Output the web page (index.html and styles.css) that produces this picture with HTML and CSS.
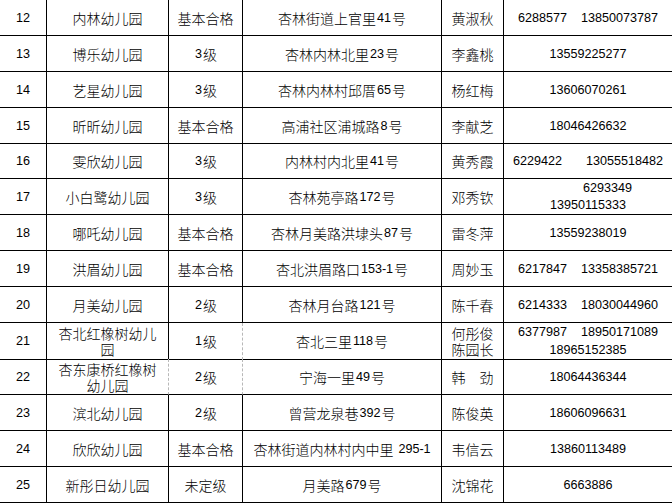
FILE: index.html
```html
<!DOCTYPE html>
<html lang="zh-CN">
<head>
<meta charset="utf-8">
<title>幼儿园名单</title>
<link rel="stylesheet" href="styles.css">
</head>
<body>
<div class="sheet">
  <div class="row">
    <div class="cell num">12</div>
    <div class="cell">内林幼儿园</div>
    <div class="cell">基本合格</div>
    <div class="cell">杏林街道上官里<span class="n">41</span>号</div>
    <div class="cell">黄淑秋</div>
    <div class="cell tel"><span class="pair"><span>6288577</span><span>13850073787</span></span></div>
  </div>
  <div class="row">
    <div class="cell num">13</div>
    <div class="cell">博乐幼儿园</div>
    <div class="cell"><span class="n">3</span>级</div>
    <div class="cell">杏林内林北里<span class="n">23</span>号</div>
    <div class="cell">李鑫桃</div>
    <div class="cell tel">13559225277</div>
  </div>
  <div class="row">
    <div class="cell num">14</div>
    <div class="cell">艺星幼儿园</div>
    <div class="cell"><span class="n">3</span>级</div>
    <div class="cell">杏林内林村邱厝<span class="n">65</span>号</div>
    <div class="cell">杨红梅</div>
    <div class="cell tel">13606070261</div>
  </div>
  <div class="row">
    <div class="cell num">15</div>
    <div class="cell">昕昕幼儿园</div>
    <div class="cell">基本合格</div>
    <div class="cell">高浦社区浦城路<span class="n">8</span>号</div>
    <div class="cell">李献芝</div>
    <div class="cell tel">18046426632</div>
  </div>
  <div class="row short">
    <div class="cell num">16</div>
    <div class="cell">雯欣幼儿园</div>
    <div class="cell"><span class="n">3</span>级</div>
    <div class="cell">内林村内北里<span class="n">41</span>号</div>
    <div class="cell">黄秀霞</div>
    <div class="cell tel"><span class="pair wide"><span>6229422</span><span>13055518482</span></span></div>
  </div>
  <div class="row">
    <div class="cell num">17</div>
    <div class="cell">小白鹭幼儿园</div>
    <div class="cell"><span class="n">3</span>级</div>
    <div class="cell">杏林苑亭路<span class="n">172</span>号</div>
    <div class="cell">邓秀钦</div>
    <div class="cell tel"><span class="lines"><span class="line shifted">6293349</span><span class="line">13950115333</span></span></div>
  </div>
  <div class="row">
    <div class="cell num">18</div>
    <div class="cell">哪吒幼儿园</div>
    <div class="cell">基本合格</div>
    <div class="cell">杏林月美路洪埭头<span class="n">87</span>号</div>
    <div class="cell">雷冬萍</div>
    <div class="cell tel">13559238019</div>
  </div>
  <div class="row">
    <div class="cell num">19</div>
    <div class="cell">洪眉幼儿园</div>
    <div class="cell">基本合格</div>
    <div class="cell">杏北洪眉路口<span class="n">153-1</span>号</div>
    <div class="cell">周妙玉</div>
    <div class="cell tel"><span class="pair"><span>6217847</span><span>13358385721</span></span></div>
  </div>
  <div class="row">
    <div class="cell num">20</div>
    <div class="cell">月美幼儿园</div>
    <div class="cell"><span class="n">2</span>级</div>
    <div class="cell">杏林月台路<span class="n">121</span>号</div>
    <div class="cell">陈千春</div>
    <div class="cell tel"><span class="pair"><span>6214333</span><span>18030044960</span></span></div>
  </div>
  <div class="row">
    <div class="cell num">21</div>
    <div class="cell"><span class="stack"><span>杏北红橡树幼儿</span><span>园</span></span></div>
    <div class="cell dash-r"><span class="n">1</span>级</div>
    <div class="cell">杏北三里<span class="n">118</span>号</div>
    <div class="cell"><span class="stack"><span>何彤俊</span><span>陈园长</span></span></div>
    <div class="cell tel"><span class="lines wide-lines"><span class="line pair"><span>6377987</span><span>18950171089</span></span><span class="line">18965152385</span></span></div>
  </div>
  <div class="row">
    <div class="cell num">22</div>
    <div class="cell dash-r"><span class="stack"><span>杏东康桥红橡树</span><span>幼儿园</span></span></div>
    <div class="cell dash-r"><span class="n">2</span>级</div>
    <div class="cell">宁海一里<span class="n">49</span>号</div>
    <div class="cell">韩　劲</div>
    <div class="cell tel">18064436344</div>
  </div>
  <div class="row">
    <div class="cell num">23</div>
    <div class="cell">滨北幼儿园</div>
    <div class="cell"><span class="n">2</span>级</div>
    <div class="cell">曾营龙泉巷<span class="n">392</span>号</div>
    <div class="cell">陈俊英</div>
    <div class="cell tel">18606096631</div>
  </div>
  <div class="row">
    <div class="cell num">24</div>
    <div class="cell">欣欣幼儿园</div>
    <div class="cell">基本合格</div>
    <div class="cell">杏林街道内林村内中里<span class="n sp">295-1</span></div>
    <div class="cell">韦信云</div>
    <div class="cell tel">13860113489</div>
  </div>
  <div class="row">
    <div class="cell num">25</div>
    <div class="cell">新彤日幼儿园</div>
    <div class="cell">未定级</div>
    <div class="cell">月美路<span class="n">679</span>号</div>
    <div class="cell">沈锦花</div>
    <div class="cell tel">6663886</div>
  </div>
</div>
</body>
</html>
```

FILE: styles.css
```css
html, body {
  margin: 0;
  padding: 0;
  background: #ffffff;
}

body {
  font-family: "Noto Sans CJK SC", "Noto Sans", sans-serif;
  font-size: 14px;
  font-weight: 300;
  color: #000000;
  overflow: hidden;
}

.sheet {
  width: 672px;
}

.row {
  display: grid;
  grid-template-columns: 47px 122px 74px 199px 62px 1fr;
  height: 36px;
}

.row.short {
  height: 35px;
}

.cell {
  border-right: 1px solid #000000;
  border-bottom: 1px solid #000000;
  display: flex;
  align-items: center;
  justify-content: center;
  text-align: center;
  line-height: 16px;
  white-space: nowrap;
}

.cell:last-child {
  border-right: none;
}

.cell.dash-r {
  border-right: 1px dashed #b8b8b8;
}

.stack {
  display: flex;
  flex-direction: column;
  align-items: center;
  line-height: 16px;
}

.n,
.num,
.tel {
  font-family: "Liberation Sans", Arial, sans-serif;
  font-size: 12.6px;
  font-weight: 400;
}

.n {
  margin: 0 1px;
}

.n.sp {
  margin-left: 5px;
  margin-right: 0;
}

.pair {
  display: flex;
  gap: 14px;
  justify-content: center;
}

.pair.wide {
  gap: 24px;
}

.lines {
  display: flex;
  flex-direction: column;
  align-items: center;
  line-height: 17px;
}

.lines.wide-lines {
  line-height: 18px;
}

.line.shifted {
  padding-left: 39px;
}
```
